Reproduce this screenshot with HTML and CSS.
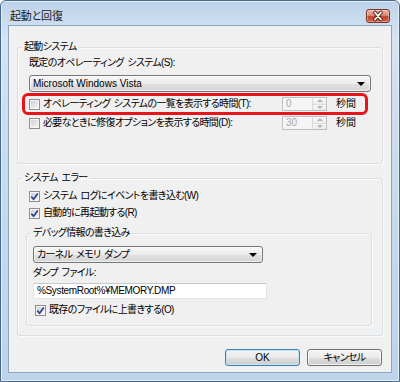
FILE: index.html
```html
<!DOCTYPE html>
<html lang="ja">
<head>
<meta charset="utf-8">
<link rel="stylesheet" href="styles.css">
</head>
<body>
<div class="window">
  <div class="titlebar">
    <span class="title">起動と回復</span>
    <span class="close">
      <svg width="22" height="12" viewBox="0 0 22 12">
        <path d="M8 2.5 L14 9.5 M14 2.5 L8 9.5" stroke="#5a1e14" stroke-width="3.6" stroke-linecap="round" fill="none"/>
        <path d="M8 2.5 L14 9.5 M14 2.5 L8 9.5" stroke="#ffffff" stroke-width="1.9" stroke-linecap="round" fill="none"/>
      </svg>
    </span>
  </div>
  <div class="client">
    <fieldset class="group g1">
      <legend>起動システム</legend>
      <div class="label">既定のオペレーティング システム(S):</div>
      <div class="combo combo-os"><span class="ctext latin">Microsoft Windows Vista</span><span class="arrow"></span></div>
      <div class="timed first">
        <div class="check"><span class="cb"></span><span>オペレーティング システムの一覧を表示する時間(T):</span></div>
        <div class="spin"><span class="val">0</span><span class="btns"><span class="up"></span><span class="down"></span></span></div>
        <span class="unit">秒間</span>
        <span class="annot"></span>
      </div>
      <div class="timed second">
        <div class="check"><span class="cb"></span><span>必要なときに修復オプションを表示する時間(D):</span></div>
        <div class="spin"><span class="val">30</span><span class="btns"><span class="up"></span><span class="down"></span></span></div>
        <span class="unit">秒間</span>
      </div>
    </fieldset>

    <fieldset class="group g2">
      <legend>システム エラー</legend>
      <div class="check row-a"><span class="cb on"><svg width="9" height="9" viewBox="0 0 9 9"><path d="M1.3 4.6 L3.6 7.2 L7.8 1.4" stroke="#2a3f8f" stroke-width="1.7" fill="none"/></svg></span><span>システム ログにイベントを書き込む(W)</span></div>
      <div class="check row-b"><span class="cb on"><svg width="9" height="9" viewBox="0 0 9 9"><path d="M1.3 4.6 L3.6 7.2 L7.8 1.4" stroke="#2a3f8f" stroke-width="1.7" fill="none"/></svg></span><span>自動的に再起動する(R)</span></div>
      <fieldset class="group inner">
        <legend>デバッグ情報の書き込み</legend>
        <div class="combo combo-dump"><span class="ctext">カーネル メモリ ダンプ</span><span class="arrow"></span></div>
        <div class="label dump-label">ダンプ ファイル:</div>
        <div class="textbox">%SystemRoot%¥MEMORY.DMP</div>
        <div class="check row-c"><span class="cb on"><svg width="9" height="9" viewBox="0 0 9 9"><path d="M1.3 4.6 L3.6 7.2 L7.8 1.4" stroke="#2a3f8f" stroke-width="1.7" fill="none"/></svg></span><span>既存のファイルに上書きする(O)</span></div>
      </fieldset>
    </fieldset>

    <div class="buttons">
      <span class="btn default latin">OK</span>
      <span class="btn">キャンセル</span>
    </div>
  </div>
</div>
</body>
</html>
```

FILE: styles.css
```css
* { box-sizing: border-box; }
html, body { margin: 0; padding: 0; }
body {
  width: 400px;
  height: 382px;
  overflow: hidden;
  background: #ffffff;
  font-family: "Liberation Sans", "Noto Sans CJK JP", sans-serif;
  font-size: 10px;
  color: #000;
  font-feature-settings: "palt";
  letter-spacing: -0.65px;
  word-spacing: 1.5px;
}
.latin { letter-spacing: 0; word-spacing: 0; }
.window {
  width: 400px;
  height: 382px;
  border: 1px solid #46698f;
  border-radius: 6px 6px 0 0;
  background: linear-gradient(180deg, #bdd3ea 0%, #d6e4f3 10%, #c9dbee 40%, #bed4eb 100%);
  padding: 0 7px 8px;
  display: flex;
  flex-direction: column;
  box-shadow: inset 0 0 0 1px #e4eef8;
}
.titlebar {
  height: 24px;
  flex: none;
  display: flex;
  justify-content: space-between;
  align-items: flex-start;
  padding: 0 2px;
}
.title {
  font-size: 11px;
  line-height: 14px;
  margin-top: 8px;
  color: #1b1b1b;
  letter-spacing: -0.2px;
}
.close {
  margin-top: 8px;
  width: 24px;
  height: 14px;
  border: 1px solid #7a3224;
  border-radius: 3px;
  background: linear-gradient(180deg, #eab2a2 0%, #d98a74 45%, #c4442a 55%, #d2644a 100%);
  display: flex;
  align-items: center;
  justify-content: center;
  box-shadow: inset 0 0 0 1px rgba(255,255,255,0.35);
}
.close svg { display: block; }
.client {
  flex: 1;
  background: #f0f0f0;
  border: 1px solid #8ea6c0;
  padding: 14px 8px 0;
  display: flex;
  flex-direction: column;
}
.group {
  margin: 0;
  padding: 0 11px;
  min-width: 0;
  border: 1px solid #d5dfe5;
  border-radius: 3px;
  box-shadow: inset 1px 1px 0 #fbfbfb, 1px 1px 0 #fbfbfb;
}
.group > legend {
  padding: 0 2px;
  margin-left: -7px;
  line-height: 14px;
}
.g1 { padding-bottom: 32px; }
.g2 { margin-top: 7px; padding-bottom: 9px; }
.inner {
  margin: 5px -1px 0 -3px;
  padding: 0 6px 7px;
}
.inner > legend { margin-left: -2px; }

.label { line-height: 14px; margin-top: 2px; }
.dump-label { margin-top: 3px; }

.combo {
  height: 17px;
  border: 1px solid #767676;
  border-radius: 3px;
  background: linear-gradient(180deg, #f6f6f6 0%, #ececec 50%, #e0e0e0 51%, #d6d6d6 100%);
  display: flex;
  align-items: center;
  justify-content: space-between;
  padding: 0 5px 0 3px;
  box-shadow: inset 0 0 0 1px rgba(255,255,255,0.6);
}
.combo-os { margin-top: 5px; }
.combo-dump { margin-top: 6px; width: 230px; }
.ctext { line-height: 14px; }
.arrow {
  width: 0;
  height: 0;
  border-left: 4px solid transparent;
  border-right: 4px solid transparent;
  border-top: 4px solid #000;
}

.check {
  display: flex;
  align-items: center;
  gap: 3px;
  height: 16px;
  line-height: 14px;
  white-space: nowrap;
}
.cb {
  width: 11px;
  height: 11px;
  flex: none;
  border: 1px solid #8f8f8f;
  background: linear-gradient(135deg, #c9ccd2 0%, #e6e7e9 60%, #f7f7f7 100%);
  box-shadow: inset 0 0 0 1px #f6f6f6;
  display: flex;
  align-items: center;
  justify-content: center;
}
.cb svg { display: block; }
.row-a { margin-top: 3px; }
.row-b { margin-top: 1px; }
.row-c { margin-top: 3px; margin-left: 2px; }

.timed {
  display: grid;
  grid-template-columns: 253px 45px auto;
  align-items: center;
  height: 16px;
  position: relative;
}
.timed.first { margin-top: 4px; }
.timed.second { margin-top: 3px; }
.spin {
  height: 14px;
  border: 1px solid #bcc0c4;
  background: #f5f5f5;
  display: flex;
}
.val {
  flex: 1;
  color: #a8a8a8;
  line-height: 12px;
  padding-left: 3px;
  letter-spacing: 0;
}
.btns {
  width: 14px;
  border-left: 1px solid #dadada;
  display: flex;
  flex-direction: column;
}
.btns span {
  flex: 1;
  display: flex;
  align-items: center;
  justify-content: center;
  background: linear-gradient(180deg, #f8f8f8, #ececec);
}
.btns .up { border-bottom: 1px solid #dddddd; }
.btns .up::before, .btns .down::before {
  content: "";
  width: 0;
  height: 0;
  border-left: 3px solid transparent;
  border-right: 3px solid transparent;
}
.btns .up::before { border-bottom: 3px solid #b4b4b4; }
.btns .down::before { border-top: 3px solid #b4b4b4; }
.unit { margin-left: 9px; line-height: 14px; letter-spacing: 0; }

.annot {
  position: absolute;
  left: -7px;
  top: -3px;
  width: 346px;
  height: 22px;
  border: 3px solid #e8141b;
  border-radius: 6px;
  pointer-events: none;
}

.textbox {
  margin-top: 3px;
  width: 234px;
  height: 16px;
  background: #fff;
  border: 1px solid #e1e6ec;
  border-top-color: #c3c8ce;
  line-height: 14px;
  padding-left: 3px;
  letter-spacing: -0.35px;
}

.buttons {
  margin-top: 13px;
  display: flex;
  justify-content: flex-end;
  gap: 7px;
  padding-right: 1px;
}
.btn {
  width: 75px;
  height: 17px;
  border: 1px solid #707070;
  border-radius: 3px;
  background: linear-gradient(180deg, #f4f4f4 0%, #ebebeb 50%, #dddddd 51%, #cfcfcf 100%);
  box-shadow: inset 0 0 0 1px rgba(255,255,255,0.7);
  display: flex;
  align-items: center;
  justify-content: center;
  line-height: 14px;
}
.btn.default {
  border-color: #3c7fb1;
  box-shadow: inset 0 0 0 1px #c4e5f6;
}
```
